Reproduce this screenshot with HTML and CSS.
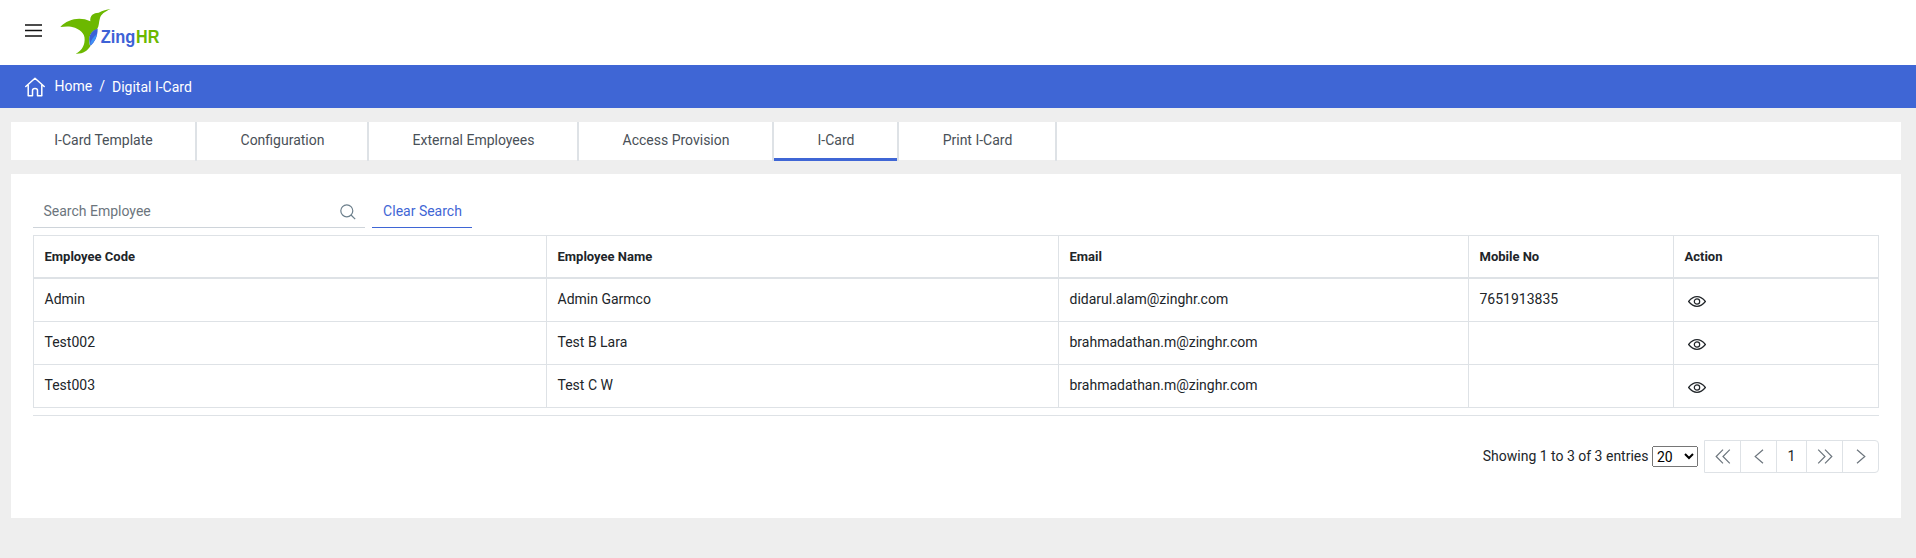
FILE: index.html
```html
<!DOCTYPE html>
<html lang="en">
<head>
<meta charset="utf-8">
<title>Digital I-Card</title>
<link rel="stylesheet" href="styles.css">
</head>
<body>
<header class="topbar">
  <svg class="menu" width="17" height="13" viewBox="0 0 17 13"><path d="M0 1h17M0 6.500h17M0 12h17" stroke="#111" stroke-width="1.600"/></svg>
  <svg class="logo" width="110" height="50" viewBox="168 15 330 150">
    <path d="M181 81C203 57 240 49 271 64C269 45 281 39 296 38C308 32 320 29 332 27C312 36 303 44 300 54C296 66 298 78 291 88C276 92 268 105 268 120C268 130 268 135 272 137C262 152 250 162 227 161C243 153 250 142 253 128C258 104 246 92 225 83C210 78 196 79 181 81Z" fill="#6cb800"/>
    <path d="M293 86C274 90 266 108 268 122Q268 134 272 137C284 126 293 110 293 86Z" fill="#3d62d6"/>
    <path d="M291 102Q272 116 270 136C282 128 289 114 291 102Z" fill="#3e93f5"/>
    <text class="wordmark zing" x="302" y="128" textLength="104" lengthAdjust="spacingAndGlyphs">Zing</text>
    <text class="wordmark hr" x="408" y="128" textLength="70" lengthAdjust="spacingAndGlyphs">HR</text>
  </svg>
</header>
<nav class="crumbs">
  <svg width="20" height="20" viewBox="0 0 20 20" fill="none" stroke="#fff" stroke-width="1.5" stroke-linejoin="round" stroke-linecap="round"><path d="M.8 9.500 10 1.200l9.200 8.300M3.200 8v10.800h4.300v-5.200q0-2 2.500-2t2.500 2v5.200h4.300V8"/></svg>
  <span class="home">Home</span><span class="slash">/</span><span class="here">Digital I-Card</span>
</nav>
<main>
  <div class="tabs">
    <a class="tab t1">I-Card Template</a><a class="tab t2">Configuration</a><a class="tab t3">External Employees</a><a class="tab t4">Access Provision</a><a class="tab t5 active">I-Card</a><a class="tab t6">Print I-Card</a>
  </div>
  <section class="card">
    <div class="search">
      <div class="field"><span>Search Employee</span>
        <svg width="16" height="16" viewBox="0 0 16 16" fill="none" stroke="#6c7f8c" stroke-width="1.200"><circle cx="6.800" cy="6.800" r="6"/><path d="m11 11 4.200 4.200"/></svg>
      </div>
      <a class="clear">Clear Search</a>
    </div>
    <table>
      <colgroup><col class="c1"><col class="c2"><col class="c3"><col class="c4"><col class="c4"></colgroup>
      <thead><tr><th>Employee Code</th><th>Employee Name</th><th>Email</th><th>Mobile No</th><th>Action</th></tr></thead>
      <tbody>
        <tr><td>Admin</td><td>Admin Garmco</td><td>didarul.alam@zinghr.com</td><td>7651913835</td><td><svg class="eye" viewBox="0 0 18 11"><path d="M.6 5.500Q4.500.7 9 .7t8.400 4.800Q13.500 10.300 9 10.300T.6 5.500Z"/><circle cx="9" cy="5.500" r="2.700"/></svg></td></tr>
        <tr><td>Test002</td><td>Test B Lara</td><td>brahmadathan.m@zinghr.com</td><td></td><td><svg class="eye" viewBox="0 0 18 11"><path d="M.6 5.500Q4.500.7 9 .7t8.400 4.800Q13.500 10.300 9 10.300T.6 5.500Z"/><circle cx="9" cy="5.500" r="2.700"/></svg></td></tr>
        <tr><td>Test003</td><td>Test C W</td><td>brahmadathan.m@zinghr.com</td><td></td><td><svg class="eye" viewBox="0 0 18 11"><path d="M.6 5.500Q4.500.7 9 .7t8.400 4.800Q13.500 10.300 9 10.300T.6 5.500Z"/><circle cx="9" cy="5.500" r="2.700"/></svg></td></tr>
      </tbody>
    </table>
    <div class="rule"></div>
    <div class="pager">
      <span class="info">Showing 1 to 3 of 3 entries</span>
      <select><option>20</option></select>
      <div class="pages">
        <a class="page"><svg width="16" height="15" viewBox="0 0 16 15"><path d="M8 .7 1.200 7.500 8 14.300M14.800.7 8 7.500l6.800 6.800"/></svg></a>
        <a class="page"><svg width="10" height="15" viewBox="0 0 10 15"><path d="M9 .7 1.200 7.500 9 14.300"/></svg></a>
        <a class="page num">1</a>
        <a class="page"><svg width="16" height="15" viewBox="0 0 16 15"><path d="M1.200.7 8 7.500 1.200 14.300M8 .7l6.800 6.800L8 14.300"/></svg></a>
        <a class="page"><svg width="10" height="15" viewBox="0 0 10 15"><path d="M1 .7 8.800 7.500 1 14.300"/></svg></a>
      </div>
    </div>
  </section>
</main>
</body>
</html>
```
FILE: styles.css
```css
* { box-sizing: border-box; }
body { margin: 0; background: #eee; font: 14px/21px Roboto, "Liberation Sans", sans-serif; color: #212529; height: 558px; overflow: hidden; }
svg { display: block; flex: none; }
.topbar { height: 65px; background: #fff; display: flex; align-items: flex-start; padding-left: 25px; }
.menu { margin-top: 24px; }
.logo { margin: 5px 0 0 14px; }
.wordmark { font: bold 57px "Liberation Sans", sans-serif; }
.zing { fill: #3d62d6; }
.hr { fill: #6cb800; }
.crumbs { height: 43px; background: #3f66d5; color: #fff; display: flex; align-items: center; padding-left: 25px; }
.home { margin-left: 9.500px; }
.slash { margin: 0 7px; }
.here { padding-top: 2px; }
main { padding: 14px 15px 0 11px; }
.tabs { height: 38px; background: #fff; display: flex; }
.tab { height: 39px; border-right: 2px solid #dee2e6; padding-left: 1px; text-align: center; line-height: 36px; color: #495057; }
.t1 { width: 186px; }
.t2 { width: 172px; }
.t3 { width: 210px; }
.t4 { width: 195px; }
.t5 { width: 125px; }
.t6 { width: 158px; }
.active { background: linear-gradient(#3f66d5, #3f66d5) 0 100% / 100% 3px no-repeat; background-clip: padding-box; }
.card { margin-top: 14px; height: 344px; background: #fff; padding: 20px 22px 0; }
.search { display: flex; gap: 7px; height: 34px; }
.field { width: 332px; border-bottom: 1px solid #ced4da; display: flex; align-items: center; justify-content: space-between; padding: 2px 9px 0 10.500px; color: #6c757d; }
.clear { width: 100px; border-bottom: 1px solid #3f66d5; color: #3f66d5; text-align: center; line-height: 34px; padding-left: 1px; }
table { margin-top: 7px; width: 1846px; table-layout: fixed; border-collapse: separate; border-spacing: 0; border: solid #dee2e6; border-width: 1px 0 0 1px; }
.c1 { width: 513px; }
.c2 { width: 512px; }
.c3 { width: 410px; }
.c4 { width: 205px; }
th, td { height: 43px; padding: 0 0 0 10.500px; text-align: left; vertical-align: middle; border: solid #dee2e6; border-width: 0 1px 1px 0; }
td { padding-bottom: 2px; }
th { font-size: 13px; font-weight: 700; border-bottom-width: 2px; }
.eye { width: 18px; height: 11px; margin: 4px 0 0 3.500px; fill: none; stroke: #212529; stroke-width: 1.200; }
.rule { height: 1px; background: #dee2e6; margin-top: 7px; }
.pager { display: flex; align-items: center; justify-content: flex-end; margin-top: 24px; }
.info { margin-right: 3.500px; }
select { width: 46px; height: 21px; font: 14px Roboto, sans-serif; margin: 0 6px 0 0; padding: 0; }
.pages { display: flex; border: 1px solid #dee2e6; border-radius: 0 4px 4px 0; height: 33px; }
.page { width: 36px; border-right: 1px solid #dee2e6; display: flex; align-items: center; justify-content: center; fill: none; stroke: #6c757d; stroke-width: 1.200; }
.num { width: 30px; stroke: none; }
.page:last-child { border-right: 0; width: 35px; }
```
